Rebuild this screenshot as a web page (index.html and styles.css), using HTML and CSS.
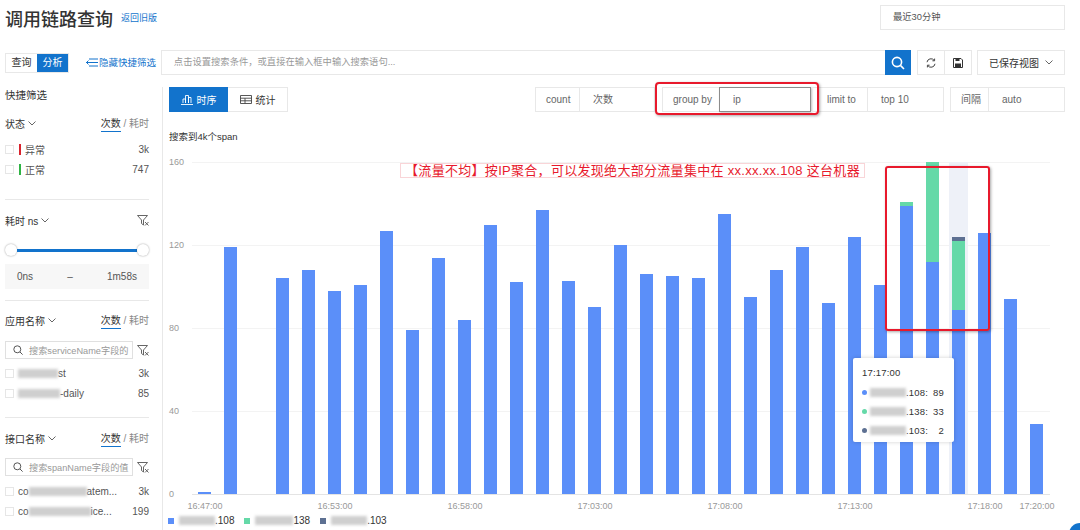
FILE: index.html
```html
<!DOCTYPE html>
<html lang="en">
<head>
    <meta charset="UTF-8">
    <title>调用链路查询</title>
    <link rel="stylesheet" href="styles.css">
</head>
<body>

<header class="page_head">
    <div class="title_box">
        <h1>调用链路查询</h1>
        <a class="back_link">返回旧版</a>
    </div>
    <div class="time_select">最近30分钟</div>
</header>

<div class="toolbar">
    <div class="mode_switch">
        <span class="mode_item">查询</span>
        <span class="mode_item active">分析</span>
    </div>
    <a class="hide_filter">
        <svg width="12" height="9" viewBox="0 0 12 9" fill="none" stroke="#1273cc" stroke-width="1"><path d="M3 1H12M0 4.5H12M3 8H12M2.5 2.5L0.5 4.5L2.5 6.5"/></svg>
        隐藏快捷筛选
    </a>
    <div class="search_bar">
        <span class="search_hint">点击设置搜索条件，或直接在输入框中输入搜索语句...</span>
        <span class="search_btn">
            <svg width="14" height="14" viewBox="0 0 14 14" fill="none" stroke="#fff" stroke-width="1.6"><circle cx="6" cy="6" r="4.6"/><path d="M9.4 9.4L13 13"/></svg>
        </span>
    </div>
    <div class="icon_btns">
        <span class="icon_btn">
            <svg width="10" height="10" viewBox="0 0 10 10" fill="none" stroke="#444" stroke-width="1"><path d="M1 4.2A4 4 0 0 1 8.2 2.4M9 5.8A4 4 0 0 1 1.8 7.6"/><path d="M8.6 0.6V2.8H6.4M1.4 9.4V7.2H3.6"/></svg>
        </span>
        <span class="icon_btn">
            <svg width="10" height="10" viewBox="0 0 10 10"><path d="M0.5 0.5H8L9.5 2V9.5H0.5Z" fill="none" stroke="#333"/><rect x="2" y="5.5" width="6" height="4" fill="#333"/><rect x="2.5" y="1" width="4" height="2" fill="#333"/></svg>
        </span>
    </div>
    <div class="saved_view">已保存视图
        <svg class="chev" width="8" height="5" viewBox="0 0 8 5" fill="none" stroke="#666"><path d="M0.5 0.5L4 4L7.5 0.5"/></svg>
    </div>
</div>

<div class="content">
    <aside class="sidebar">
        <h3>快捷筛选</h3>

        <div class="filter first">
            <div class="filter_head">
                <span>状态 <svg class="chev" width="8" height="5" viewBox="0 0 8 5" fill="none" stroke="#666"><path d="M0.5 0.5L4 4L7.5 0.5"/></svg></span>
                <span class="metric"><b>次数</b> / 耗时</span>
            </div>
            <div class="rows status_rows">
                <div class="row"><i class="check"></i><i class="tick red"></i><span class="name">异常</span><span class="num">3k</span></div>
                <div class="row"><i class="check"></i><i class="tick green"></i><span class="name">正常</span><span class="num">747</span></div>
            </div>
        </div>

        <div class="filter slider_filter">
            <div class="filter_head">
                <span>耗时 ns <svg class="chev" width="8" height="5" viewBox="0 0 8 5" fill="none" stroke="#666"><path d="M0.5 0.5L4 4L7.5 0.5"/></svg></span>
                <svg class="clear" width="12" height="11" viewBox="0 0 12 11" fill="none" stroke="#555" stroke-width="0.9"><path d="M0.5 0.5H10.5L6.5 5V10L4.5 8.5V5Z"/><path d="M8 7L11.5 10.5M11.5 7L8 10.5"/></svg>
            </div>
            <div class="slider"><i class="thumb"></i><i class="track"></i><i class="thumb"></i></div>
            <div class="range"><span>0ns</span><span>–</span><span>1m58s</span></div>
        </div>

        <div class="filter app_filter">
            <div class="filter_head">
                <span>应用名称 <svg class="chev" width="8" height="5" viewBox="0 0 8 5" fill="none" stroke="#666"><path d="M0.5 0.5L4 4L7.5 0.5"/></svg></span>
                <span class="metric"><b>次数</b> / 耗时</span>
            </div>
            <div class="side_search">
                <div class="side_input">
                    <svg width="10" height="10" viewBox="0 0 10 10" fill="none" stroke="#555" stroke-width="1"><circle cx="4.3" cy="4.3" r="3.5"/><path d="M7 7L9.6 9.6"/></svg>
                    <span>搜索serviceName字段的</span>
                </div>
                <svg class="clear" width="12" height="11" viewBox="0 0 12 11" fill="none" stroke="#555" stroke-width="0.9"><path d="M0.5 0.5H10.5L6.5 5V10L4.5 8.5V5Z"/><path d="M8 7L11.5 10.5M11.5 7L8 10.5"/></svg>
            </div>
            <div class="rows">
                <div class="row"><i class="check"></i><span class="name"><i class="blur w40"></i>st</span><span class="num">3k</span></div>
                <div class="row"><i class="check"></i><span class="name"><i class="blur w42"></i>-daily</span><span class="num">85</span></div>
            </div>
        </div>

        <div class="filter api_filter">
            <div class="filter_head">
                <span>接口名称 <svg class="chev" width="8" height="5" viewBox="0 0 8 5" fill="none" stroke="#666"><path d="M0.5 0.5L4 4L7.5 0.5"/></svg></span>
                <span class="metric"><b>次数</b> / 耗时</span>
            </div>
            <div class="side_search">
                <div class="side_input">
                    <svg width="10" height="10" viewBox="0 0 10 10" fill="none" stroke="#555" stroke-width="1"><circle cx="4.3" cy="4.3" r="3.5"/><path d="M7 7L9.6 9.6"/></svg>
                    <span>搜索spanName字段的值</span>
                </div>
                <svg class="clear" width="12" height="11" viewBox="0 0 12 11" fill="none" stroke="#555" stroke-width="0.9"><path d="M0.5 0.5H10.5L6.5 5V10L4.5 8.5V5Z"/><path d="M8 7L11.5 10.5M11.5 7L8 10.5"/></svg>
            </div>
            <div class="rows">
                <div class="row"><i class="check"></i><span class="name">co<i class="blur w58"></i>atem...</span><span class="num">3k</span></div>
                <div class="row"><i class="check"></i><span class="name">co<i class="blur w62"></i>ice...</span><span class="num">199</span></div>
            </div>
        </div>
    </aside>

    <main class="main">
        <div class="main_bar">
            <div class="view_tabs">
                <span class="view_tab active">
                    <svg width="12" height="11" viewBox="0 0 12 11" fill="none" stroke="#fff" stroke-width="0.9"><path d="M2 9V5H4.5V9M4.5 9V1.5H7.5V9M7.5 9V3.5H10V9M0 10.5H12"/></svg>
                    时序
                </span>
                <span class="view_tab">
                    <svg width="12" height="9" viewBox="0 0 12 9" fill="none" stroke="#444" stroke-width="0.9"><path d="M0.5 0.5H11.5V8.5H0.5ZM0.5 3.2H11.5M0.5 5.8H11.5M5 3.2V8.5"/></svg>
                    统计
                </span>
            </div>
            <div class="configs">
                <div class="cfg group_count">
                    <span class="cfg_label w44">count</span><span class="cfg_value w76">次数</span>
                </div>
                <div class="cfg group_by">
                    <span class="cfg_label w57">group by</span><span class="cfg_value cfg_input w92">ip</span>
                </div>
                <div class="cfg group_limit">
                    <span class="cfg_label w56">limit to</span><span class="cfg_value w77">top 10</span>
                </div>
                <div class="cfg group_step">
                    <span class="cfg_label w38">间隔</span><span class="cfg_value w77">auto</span>
                </div>
            </div>
        </div>

        <div class="result_count">搜索到4k个span</div>

        <div class="chart">
            <div class="y_axis"><span>160</span><span>120</span><span>80</span><span>40</span><span>0</span></div>
            <div class="plot">
                <div class="col"><i class="seg blue" style="height:2px"></i></div>
                <div class="col"><i class="seg blue" style="height:247px"></i></div>
                <div class="col"></div>
                <div class="col"><i class="seg blue" style="height:216px"></i></div>
                <div class="col"><i class="seg blue" style="height:224px"></i></div>
                <div class="col"><i class="seg blue" style="height:203px"></i></div>
                <div class="col"><i class="seg blue" style="height:209px"></i></div>
                <div class="col"><i class="seg blue" style="height:263px"></i></div>
                <div class="col"><i class="seg blue" style="height:164px"></i></div>
                <div class="col"><i class="seg blue" style="height:236px"></i></div>
                <div class="col"><i class="seg blue" style="height:174px"></i></div>
                <div class="col"><i class="seg blue" style="height:269px"></i></div>
                <div class="col"><i class="seg blue" style="height:212px"></i></div>
                <div class="col"><i class="seg blue" style="height:284px"></i></div>
                <div class="col"><i class="seg blue" style="height:213px"></i></div>
                <div class="col"><i class="seg blue" style="height:187px"></i></div>
                <div class="col"><i class="seg blue" style="height:249px"></i></div>
                <div class="col"><i class="seg blue" style="height:220px"></i></div>
                <div class="col"><i class="seg blue" style="height:218px"></i></div>
                <div class="col"><i class="seg blue" style="height:216px"></i></div>
                <div class="col"><i class="seg blue" style="height:280px"></i></div>
                <div class="col"><i class="seg blue" style="height:197px"></i></div>
                <div class="col"><i class="seg blue" style="height:224px"></i></div>
                <div class="col"><i class="seg blue" style="height:247px"></i></div>
                <div class="col"><i class="seg blue" style="height:191px"></i></div>
                <div class="col"><i class="seg blue" style="height:257px"></i></div>
                <div class="col"><i class="seg blue" style="height:209px"></i></div>
                <div class="col"><i class="seg green" style="height:4px"></i><i class="seg blue" style="height:288px"></i></div>
                <div class="col"><i class="seg green" style="height:100px"></i><i class="seg blue" style="height:232px"></i></div>
                <div class="col hover"><i class="seg grey" style="height:4px"></i><i class="seg green" style="height:69px"></i><i class="seg blue" style="height:184px"></i></div>
                <div class="col"><i class="seg blue" style="height:261px"></i></div>
                <div class="col"><i class="seg blue" style="height:195px"></i></div>
                <div class="col"><i class="seg blue" style="height:70px"></i></div>
            </div>

            <div class="note">【流量不均】按IP聚合，可以发现绝大部分流量集中在 xx.xx.xx.108 这台机器</div>
            <div class="red_box"></div>

            <div class="tooltip">
                <div class="tip_time">17:17:00</div>
                <div class="tip_row"><i class="dot blue"></i><i class="blur w36"></i><span class="tip_ip">.108:</span><span class="tip_val">89</span></div>
                <div class="tip_row"><i class="dot green"></i><i class="blur w36"></i><span class="tip_ip">.138:</span><span class="tip_val">33</span></div>
                <div class="tip_row"><i class="dot grey"></i><i class="blur w36"></i><span class="tip_ip">.103:</span><span class="tip_val">2</span></div>
            </div>
        </div>

        <div class="x_axis">
            <span>16:47:00</span><span></span><span></span><span></span><span></span>
            <span>16:53:00</span><span></span><span></span><span></span><span></span>
            <span>16:58:00</span><span></span><span></span><span></span><span></span>
            <span>17:03:00</span><span></span><span></span><span></span><span></span>
            <span>17:08:00</span><span></span><span></span><span></span><span></span>
            <span>17:13:00</span><span></span><span></span><span></span><span></span>
            <span>17:18:00</span><span></span><span>17:20:00</span>
        </div>

        <div class="legend">
            <span class="legend_item"><i class="swatch blue"></i><i class="blur w36"></i>.108</span>
            <span class="legend_item"><i class="swatch green"></i><i class="blur w38"></i>138</span>
            <span class="legend_item"><i class="swatch grey"></i><i class="blur w36"></i>.103</span>
        </div>
    </main>
</div>

<div class="help_ball"></div>

</body>
</html>
```

FILE: styles.css
```css
html, body {
    height: 100%;
}

body {
    margin: 0;
    position: relative;
    overflow: hidden;
    background-color: #fff;
    color: #333;
    font-family: "Liberation Sans", "Noto Sans CJK SC", sans-serif;
    font-size: 10px;
}

i {
    display: block;
    font-style: normal;
}

svg {
    display: block;
    flex: none;
}

.blue { background-color: #5b8ff9; }
.green { background-color: #65d9a8; }
.grey { background-color: #5d7092; }

.page_head {
    display: flex;
    justify-content: space-between;
    height: 50px;
    padding: 5px 15px 0 5px;
    box-sizing: border-box;
}

.title_box {
    display: flex;
    align-items: center;
    height: 25px;
}

.title_box h1 {
    margin: 0;
    font-size: 18px;
    font-weight: 500;
    color: #333;
}

.back_link {
    margin-left: 8px;
    font-size: 9px;
    color: #1273cc;
}

.time_select {
    width: 185px;
    height: 25px;
    box-sizing: border-box;
    padding-left: 12px;
    line-height: 23px;
    border: 1px solid #e8e8e8;
    color: #555;
    font-size: 9.3px;
}

.toolbar {
    display: flex;
    align-items: stretch;
    height: 25px;
    padding: 0 15px 0 5px;
}

.mode_switch {
    display: flex;
    align-self: center;
    width: 64px;
    height: 20px;
    box-sizing: border-box;
    border: 1px solid #e8e8e8;
}

.mode_item {
    flex: 1;
    text-align: center;
    line-height: 18px;
}

.mode_item.active {
    background-color: #1273cc;
    color: #fff;
}

.hide_filter {
    display: flex;
    align-items: center;
    gap: 1px;
    width: 75px;
    margin-left: 17px;
    margin-top: -1px;
    color: #1273cc;
    font-size: 9.5px;
    white-space: nowrap;
}

.search_bar {
    display: flex;
    justify-content: space-between;
    width: 751px;
    box-sizing: border-box;
    border: 1px solid #e8e8e8;
    border-right: none;
}

.search_hint {
    padding-left: 12px;
    line-height: 23px;
    font-size: 9.3px;
    color: #999;
}

.search_btn {
    display: flex;
    align-items: center;
    justify-content: center;
    width: 26px;
    margin: -1px 0;
    background-color: #1273cc;
}

.icon_btns {
    display: flex;
    margin-left: 6px;
    border: 1px solid #e8e8e8;
}

.icon_btn {
    display: flex;
    align-items: center;
    justify-content: center;
    width: 26px;
}

.icon_btn + .icon_btn {
    border-left: 1px solid #e8e8e8;
}

.saved_view {
    display: flex;
    align-items: center;
    justify-content: center;
    gap: 6px;
    width: 88px;
    margin-left: 5px;
    box-sizing: border-box;
    border: 1px solid #e8e8e8;
}

.content {
    display: flex;
    margin-top: 12px;
}

.sidebar {
    width: 163px;
    height: 443px;
    box-sizing: border-box;
    padding: 0 13px 0 6px;
    border-right: 1px solid #e8e8e8;
}

.sidebar h3 {
    margin: 0 0 0 -1px;
    height: 16px;
    line-height: 16px;
    font-size: 10.5px;
    font-weight: 400;
}

.filter {
    margin-left: -1px;
    border-bottom: 1px solid #e8e8e8;
}

.filter_head {
    display: flex;
    justify-content: space-between;
    align-items: center;
    height: 16px;
}

.filter_head > span:first-child {
    display: flex;
    align-items: center;
    gap: 3px;
}

.metric {
    color: #888;
}

.metric b {
    display: inline-block;
    height: 16px;
    line-height: 16px;
    font-weight: 400;
    color: #333;
    border-bottom: 1px solid #1273cc;
    box-sizing: border-box;
}

.filter.first {
    padding-top: 12px;
    height: 97px;
    box-sizing: border-box;
}

.status_rows {
    margin-top: 8px;
}

.slider_filter {
    padding-top: 12px;
    height: 101px;
    box-sizing: border-box;
}

.app_filter {
    padding-top: 11px;
    height: 117px;
    box-sizing: border-box;
}

.api_filter {
    padding-top: 12px;
    border-bottom: none;
}

.row {
    display: flex;
    align-items: center;
    height: 20px;
    color: #555;
}

.check {
    flex: none;
    width: 9px;
    height: 9px;
    border: 1px solid #e6e6e6;
    box-sizing: border-box;
}

.tick {
    flex: none;
    width: 2px;
    height: 11px;
    margin-left: 5px;
}

.tick.red { background-color: #d9232d; }
.tick.green { background-color: #2fb344; }

.name {
    display: flex;
    align-items: center;
    margin-left: 4px;
    white-space: nowrap;
}

.num {
    margin-left: auto;
}

.blur {
    flex: none;
    height: 9px;
    background-color: #cfcfcf;
    filter: blur(1.5px);
}

.w36 { width: 36px; }
.w38 { width: 38px; }
.w40 { width: 40px; }
.w42 { width: 42px; }
.w44 { width: 44px; }
.w56 { width: 56px; }
.w57 { width: 57px; }
.w58 { width: 58px; }
.w62 { width: 62px; }
.w76 { width: 76px; }
.w77 { width: 77px; }
.w92 { width: 92px; }

.slider {
    display: flex;
    align-items: center;
    height: 20px;
    margin-top: 12px;
}

.thumb {
    flex: none;
    width: 12px;
    height: 12px;
    border-radius: 50%;
    background-color: #fff;
    box-shadow: 0 0 2px rgba(0, 0, 0, 0.4);
}

.track {
    flex: 1;
    height: 3px;
    background-color: #1273cc;
}

.range {
    display: flex;
    justify-content: space-between;
    height: 25px;
    margin-top: 4px;
    padding: 0 12px;
    line-height: 25px;
    background-color: #f7f7f7;
    color: #555;
}

.side_search {
    display: flex;
    align-items: center;
    justify-content: space-between;
    height: 18px;
    margin-top: 13px;
    margin-bottom: 4px;
}

.api_filter .side_search {
    margin-top: 12px;
    margin-bottom: 5px;
}

.side_input {
    display: flex;
    align-items: center;
    gap: 6px;
    width: 128px;
    height: 18px;
    box-sizing: border-box;
    padding-left: 7px;
    border: 1px solid #e0e0e0;
    font-size: 9.2px;
    color: #999;
    white-space: nowrap;
}

.main {
    position: relative;
    width: 917px;
    box-sizing: border-box;
    padding: 0 15px 0 6px;
}

.main_bar {
    display: flex;
    justify-content: space-between;
    height: 25px;
}

.view_tabs {
    display: flex;
    width: 119px;
    box-sizing: border-box;
    border: 1px solid #e8e8e8;
}

.view_tab {
    display: flex;
    align-items: center;
    justify-content: center;
    gap: 4px;
    flex: 1;
}

.view_tab.active {
    flex: none;
    width: 59px;
    margin: -1px 0 -1px -1px;
    background-color: #1273cc;
    color: #fff;
}

.configs {
    display: flex;
}

.cfg {
    display: flex;
}

.group_by {
    margin-left: 7px;
}

.group_step {
    margin-left: 6px;
}

.cfg_label, .cfg_value {
    box-sizing: border-box;
    line-height: 23px;
    border: 1px solid #e8e8e8;
    color: #666;
}

.cfg_label {
    padding-left: 10px;
    border-right: none;
}

.cfg_value {
    padding-left: 13px;
}

.group_limit .cfg_label {
    padding-left: 16px;
    border-left: none;
}

.cfg_input {
    border-color: #8c8c8c;
    box-shadow: 1px 1px 2px rgba(0, 0, 0, 0.25);
}

.group_by::after {
    content: "";
    position: absolute;
    left: 492px;
    top: -5px;
    width: 164px;
    height: 33px;
    box-sizing: border-box;
    border: 2px solid #e8192c;
    border-radius: 4px;
    box-shadow: 1px 1px 3px rgba(0, 0, 0, 0.35);
}

.result_count {
    height: 16px;
    margin-top: 17px;
    line-height: 16px;
    font-size: 9.5px;
}

.chart {
    display: flex;
    margin-top: 17px;
}

.y_axis {
    display: flex;
    flex-direction: column;
    justify-content: space-between;
    width: 23px;
    height: 344px;
    margin-top: -6px;
    font-size: 9px;
    line-height: 12px;
    color: #999;
}

.plot {
    display: flex;
    align-items: flex-end;
    width: 858px;
    height: 333px;
    box-sizing: border-box;
    border-bottom: 1px solid #e4e4e4;
    background-image: repeating-linear-gradient(#f3f3f3 0, #f3f3f3 1px, transparent 1px, transparent 83px);
}

.col {
    flex: none;
    position: relative;
    display: flex;
    flex-direction: column;
    width: 26px;
}

.seg {
    position: relative;
    width: 13px;
    margin-left: 6px;
}

.col.hover::before {
    content: "";
    position: absolute;
    left: 3px;
    bottom: 0;
    width: 19px;
    height: 332px;
    background-color: #eef1f8;
}

.note {
    position: absolute;
    left: 237px;
    top: 76px;
    width: 465px;
    height: 15px;
    box-sizing: border-box;
    border: 1px solid #f9d5d8;
    background-color: #fff;
    color: #e8192c;
    font-size: 13px;
    letter-spacing: 0.3px;
    line-height: 13px;
    text-align: center;
    white-space: nowrap;
}

.red_box {
    position: absolute;
    left: 722px;
    top: 79px;
    width: 105px;
    height: 165px;
    box-sizing: border-box;
    border: 2px solid #e8192c;
    border-radius: 3px;
    box-shadow: 1px 1px 3px rgba(0, 0, 0, 0.35);
}

.tooltip {
    position: absolute;
    left: 690px;
    top: 271px;
    width: 101px;
    height: 84px;
    box-sizing: border-box;
    padding: 8px 10px 0 9px;
    background-color: #fff;
    border-radius: 2px;
    box-shadow: 0 0 4px rgba(0, 0, 0, 0.18);
    font-size: 9.5px;
    letter-spacing: 0.2px;
}

.tip_time {
    height: 14px;
    line-height: 14px;
}

.tip_row {
    display: flex;
    align-items: center;
    height: 18px;
    margin-top: 1px;
}

.tip_time + .tip_row {
    margin-top: 3px;
}

.dot {
    flex: none;
    width: 5px;
    height: 5px;
    border-radius: 50%;
    margin-right: 3px;
}

.tip_val {
    margin-left: auto;
}

.x_axis {
    display: grid;
    grid-template-columns: repeat(33, 26px);
    margin-left: 23px;
    height: 13px;
    font-size: 9px;
    line-height: 13px;
    color: #999;
}

.x_axis span {
    display: flex;
    justify-content: center;
    white-space: nowrap;
}

.legend {
    display: flex;
    gap: 10px;
    margin-top: 1px;
    height: 13px;
    margin-left: -1px;
}

.legend_item {
    display: flex;
    align-items: center;
    line-height: 13px;
}

.swatch {
    width: 6px;
    height: 6px;
    margin-right: 5px;
}

.help_ball {
    position: absolute;
    left: 1069px;
    top: 523px;
    width: 22px;
    height: 22px;
    border-radius: 50%;
    background-color: #1273cc;
}
```
